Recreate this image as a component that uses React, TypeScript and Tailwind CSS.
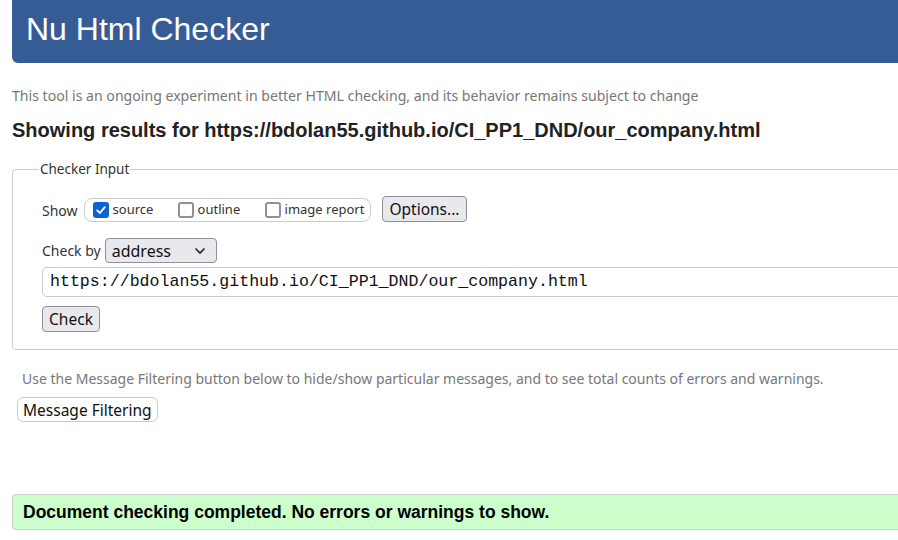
import React from 'react';

function Box({ checked, label }: { checked?: boolean; label: string }) {
  return (
    <span className="flex items-center gap-[4px]">
      {checked ? (
        <span className="flex h-[16px] w-[16px] items-center justify-center rounded-[3px] bg-[#0b61d6]">
          <svg width="12" height="12" viewBox="0 0 12 12" fill="none">
            <path d="M2.2 6.3 L4.9 9 L9.8 3.2" stroke="white" strokeWidth="1.9" strokeLinecap="round" strokeLinejoin="round" />
          </svg>
        </span>
      ) : (
        <span className="h-[16px] w-[16px] rounded-[3px] border-2 border-[#8f8f9d] bg-white" />
      )}
      <span className="text-[13px] text-[#333]">{label}</span>
    </span>
  );
}

export default function App() {
  return (
    <div className="h-[540px] w-[898px] overflow-hidden bg-white font-['Noto_Sans',sans-serif] text-[#222]">
      {/* header */}
      <div className="ml-3 h-[63px] w-[900px] rounded-bl-[6px] bg-[#365c96] pl-[14px] pt-[9px]">
        <h1 className="font-['Liberation_Sans',Arial,sans-serif] text-[32px] leading-[40px] text-white">Nu Html Checker</h1>
      </div>

      <p className="ml-3 mt-[24px] text-[14.1px] leading-[18px] text-[#777]">
        This tool is an ongoing experiment in better HTML checking, and its behavior remains subject to change
      </p>
      <h2 className="ml-3 mt-[13px] font-['Liberation_Sans',Arial,sans-serif] text-[20px] font-bold leading-[24px] text-[#222]">
        Showing results for https://bdolan55.github.io/CI_PP1_DND/our_company.html
      </h2>

      {/* checker input */}
      <fieldset className="ml-3 mt-[18px] w-[900px] rounded-[4px] border border-[#ccc] pb-[17px] pl-[29px]">
        <legend className="-ml-[3px] px-[1px] text-[13.5px] leading-[18px] text-[#333]">Checker Input</legend>

        <div className="mt-[20px] flex items-center">
          <span className="text-[14px] text-[#333]">Show</span>
          <div className="ml-[6px] flex h-[24px] items-center rounded-[8px] border border-[#ccc] pl-[8px] pr-[6px]">
            <span className="w-[85px]"><Box checked label="source" /></span>
            <span className="w-[87px]"><Box label="outline" /></span>
            <Box label="image report" />
          </div>
          <button className="ml-[11px] -mt-[2px] h-[26px] rounded-[4px] border border-[#8f8f9d] bg-[#e9e9ed] px-[6px] text-[15.5px] leading-[20px] text-[#111]">
            Options...
          </button>
        </div>

        <div className="mt-[16px] flex items-center">
          <span className="text-[14px] text-[#333]">Check by</span>
          <div className="ml-[4px] flex h-[25px] w-[112px] items-center justify-between rounded-[4px] border border-[#8f8f9d] bg-[#e9e9ed] pl-[6px] pr-[10px]">
            <span className="text-[16px] leading-[20px] text-[#111]">address</span>
            <svg width="12" height="8" viewBox="0 0 12 8" fill="none">
              <path d="M1.5 1.5 L6 6 L10.5 1.5" stroke="#222" strokeWidth="1.6" />
            </svg>
          </div>
        </div>

        <div className="mt-[4px] flex h-[30px] w-[870px] items-center rounded-[5px] border border-[#ccc] pl-[7px]">
          <span className="font-['Liberation_Mono',monospace] text-[16.6px] leading-[20px] text-[#111]">
            https://bdolan55.github.io/CI_PP1_DND/our_company.html
          </span>
        </div>

        <button className="mt-[9px] h-[26px] w-[58px] rounded-[4px] border border-[#8f8f9d] bg-[#e9e9ed] text-[15.5px] leading-[20px] text-[#111]">
          Check
        </button>
      </fieldset>

      <p className="ml-[22px] mt-[20px] text-[14px] leading-[18px] text-[#777]">
        Use the Message Filtering button below to hide/show particular messages, and to see total counts of errors and warnings.
      </p>
      <button className="ml-[17px] mt-[9px] h-[25px] rounded-[6px] border border-[#ccc] bg-white px-[5px] text-[15.5px] leading-[20px] text-[#111]">
        Message Filtering
      </button>

      <div className="ml-3 mt-[72px] flex h-[36px] w-[900px] items-center rounded-[4px] border border-[#ccc] bg-[#ccffcc] pl-[10px]">
        <span className="font-['Liberation_Sans',Arial,sans-serif] text-[17.5px] font-bold text-black">
          Document checking completed. No errors or warnings to show.
        </span>
      </div>
    </div>
  );
}
